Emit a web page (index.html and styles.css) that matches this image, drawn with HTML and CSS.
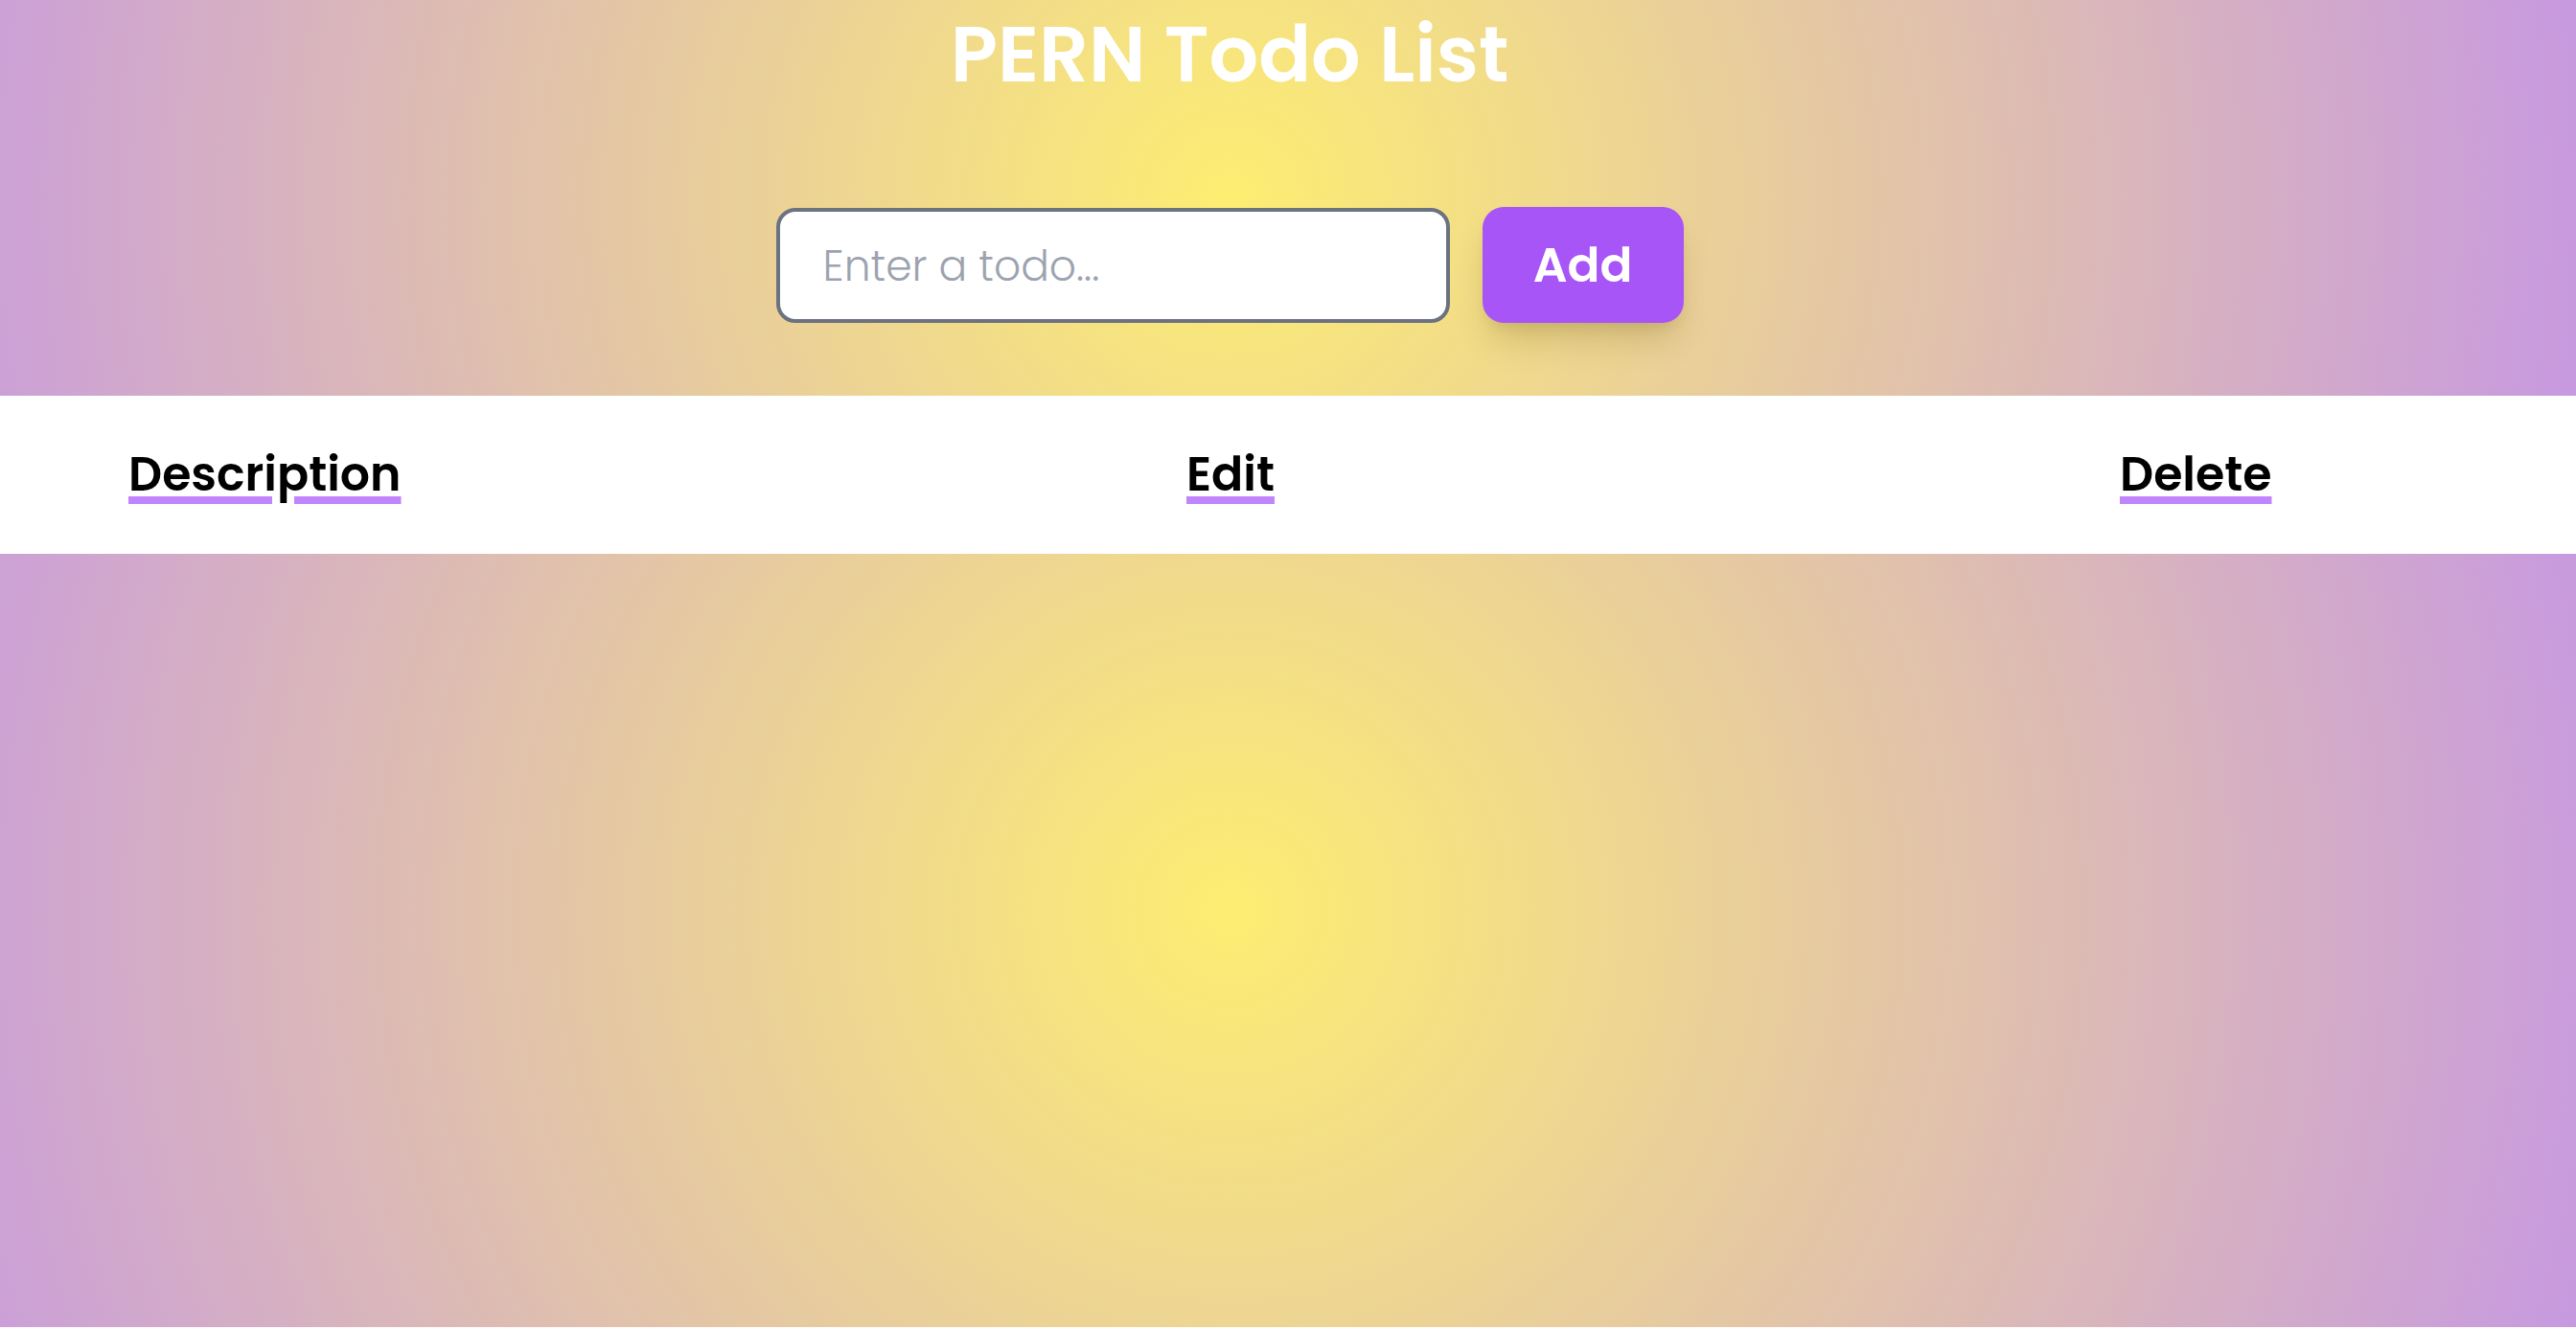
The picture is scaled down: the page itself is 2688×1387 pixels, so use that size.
FILE: index.html
```html
<!DOCTYPE html>
<html lang="en">
<head>
<meta charset="utf-8">
<title>PERN Todo List</title>
<link rel="stylesheet" href="styles.css">
</head>
<body>
  <header class="hero">
    <h1 class="title">PERN Todo List</h1>
    <form class="todo-form">
      <input class="todo-input" type="text" placeholder="Enter a todo...">
      <button class="add-btn" type="button">Add</button>
    </form>
  </header>
  <section class="table-head">
    <div class="col col-desc"><span class="th">Description</span></div>
    <div class="col col-edit"><span class="th">Edit</span></div>
    <div class="col col-del"><span class="th">Delete</span></div>
  </section>
  <main class="list-area"></main>
</body>
</html>
```
FILE: styles.css
```css
html, body {
  margin: 0;
  padding: 0;
  background: #ffffff;
}

body {
  font-family: Poppins, Inter, "Noto Sans", sans-serif;
}

.hero {
  height: 413px;
  box-sizing: border-box;
  padding-right: 122px;
  display: flex;
  flex-direction: column;
  align-items: center;
  background: radial-gradient(circle at 1284px 50%, #fdee72 0%, #c799e0 100%);
}

.title {
  margin: 0;
  padding-top: 7px;
  height: 99px;
  line-height: 99px;
  font-size: 81px;
  font-weight: 600;
  color: #ffffff;
}

.todo-form {
  margin-top: 111px;
  display: flex;
  gap: 34px;
  align-items: flex-start;
}

.todo-input {
  box-sizing: border-box;
  width: 703px;
  height: 120px;
  border: 4px solid #6b7280;
  border-radius: 20px;
  padding: 0 0 0 45px;
  background: #ffffff;
  font-family: inherit;
  font-size: 44px;
  font-weight: 300;
  color: #111827;
  outline: none;
}

.todo-input::placeholder {
  color: #9ca3af;
}

.add-btn {
  box-sizing: border-box;
  width: 210px;
  height: 121px;
  margin-top: -1px;
  border: none;
  border-radius: 22px;
  background: #a855f7;
  color: #ffffff;
  font-family: inherit;
  font-size: 50px;
  font-weight: 600;
  box-shadow: 0 24px 36px -8px rgba(90, 70, 0, 0.22), 0 8px 14px -6px rgba(90, 70, 0, 0.12);
  cursor: pointer;
}

.table-head {
  height: 165px;
  box-sizing: border-box;
  padding-left: 134px;
  display: grid;
  grid-template-columns: 1104px 974px 1fr;
  align-items: center;
  background: #ffffff;
}

.th {
  font-size: 49px;
  font-weight: 600;
  color: #000000;
  text-decoration: underline;
  text-decoration-color: #c084fc;
  text-decoration-thickness: 8px;
  text-underline-offset: 6px;
}

.list-area {
  display: block;
  height: 807px;
  background: radial-gradient(circle at 1284px 46%, #fdee72 0%, #c799e0 100%);
}
```
